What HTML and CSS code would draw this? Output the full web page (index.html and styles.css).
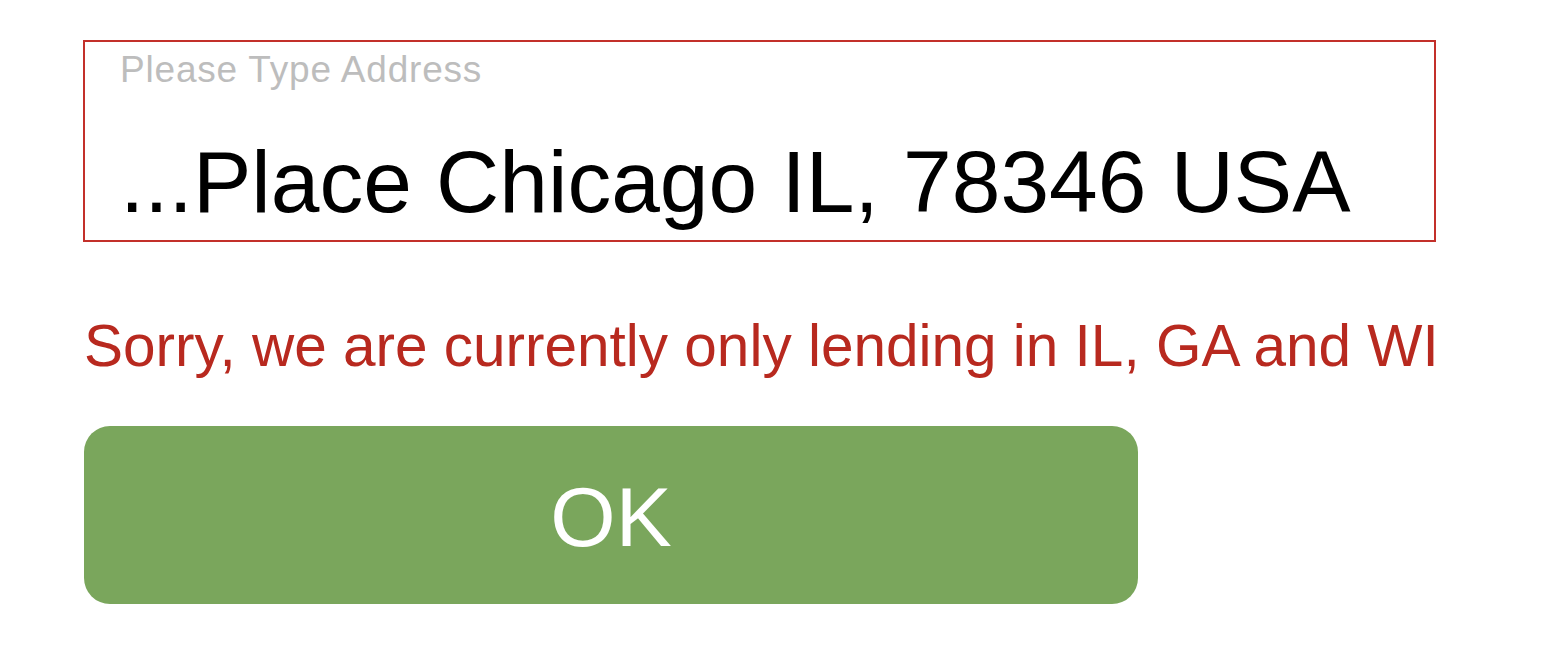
FILE: index.html
```html
<!DOCTYPE html>
<html>
<head>
<meta charset="utf-8">
<link rel="stylesheet" href="styles.css">
</head>
<body>
<div class="page">
  <div class="field">
    <div class="label">Please Type Address</div>
    <div class="value">...Place Chicago IL, 78346 USA</div>
  </div>
  <div class="error">Sorry, we are currently only lending in IL, GA and WI</div>
  <button class="ok">OK</button>
</div>
</body>
</html>
```
FILE: styles.css
```css
html, body {
  margin: 0;
  padding: 0;
  background: #ffffff;
}
body {
  font-family: "Liberation Sans", Arial, sans-serif;
}
.page {
  display: flex;
  flex-direction: column;
  align-items: flex-start;
  padding: 40px 0 0 83px;
}
.field {
  box-sizing: border-box;
  width: 1353px;
  height: 202px;
  border: 2px solid #c3302a;
  padding: 0 0 0 35px;
  display: flex;
  flex-direction: column;
}
.label {
  font-size: 37px;
  line-height: 40px;
  letter-spacing: 0.8px;
  margin-top: 8px;
  color: #bdbdbd;
}
.value {
  font-size: 87.5px;
  line-height: 100px;
  margin-top: 42px;
  color: #000;
  white-space: nowrap;
}
.error {
  margin-top: 71px;
  margin-left: 1px;
  font-size: 58.5px;
  line-height: 66px;
  color: #b8291f;
  white-space: nowrap;
}
.ok {
  margin-top: 47px;
  margin-left: 1px;
  width: 1054px;
  height: 178px;
  border: none;
  border-radius: 26px;
  background: #7aa65c;
  color: #fff;
  font-family: "Liberation Sans", Arial, sans-serif;
  font-size: 84px;
  padding: 4px 0 0 0;
}
```
